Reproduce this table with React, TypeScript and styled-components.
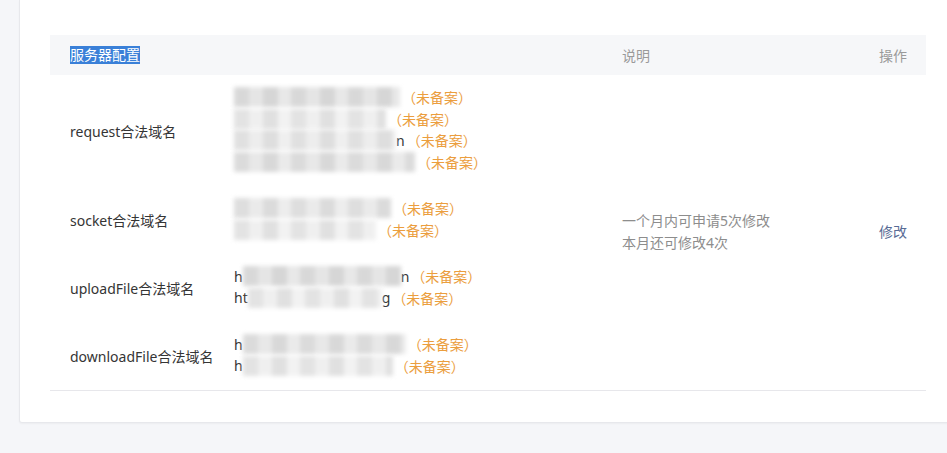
import React from "react";
import styled, { createGlobalStyle } from "styled-components";

const Global = createGlobalStyle`
  html, body { margin: 0; padding: 0; background: #f5f6f9; }
  body { font-family: "Noto Sans", "Noto Sans CJK SC", sans-serif; font-size: 14px; color: #353535; overflow: hidden; }
`;

const Page = styled.div`
  width: 947px;
  height: 453px;
  overflow: hidden;
  padding-left: 19px;
  box-sizing: border-box;
`;

const Card = styled.div`
  width: 960px;
  background: #fff;
  border: 1px solid #e7e8ec;
  border-top: none;
  border-radius: 0 0 3px 3px;
  box-shadow: 0 1px 2px rgba(0, 0, 0, 0.04);
  padding: 35px 0 31px 30px;
  box-sizing: border-box;
`;

const Table = styled.div`
  width: 876px;
  display: grid;
  grid-template-columns: 184px 388px 1fr 100px;
  border-bottom: 1px solid #e7e7eb;
`;

const HeadCell = styled.div<{ $right?: boolean; $pad?: number }>`
  background: #f6f7f9;
  height: 40px;
  display: flex;
  align-items: center;
  justify-content: ${(p) => (p.$right ? "flex-end" : "flex-start")};
  padding: ${(p) => (p.$right ? "0 19px 0 0" : `0 0 0 ${p.$pad ?? 20}px`)};
  color: #9a9a9a;
  font-size: 14px;
`;

const HeadBlank = styled.div`
  background: #f6f7f9;
  height: 40px;
`;

const Selected = styled.span`
  background: #3a80d8;
  color: #fff;
  line-height: 18px;
  display: inline-block;
`;

const LabelCell = styled.div`
  display: flex;
  align-items: center;
  padding-left: 20px;
  color: #353535;
  grid-column: 1;
`;

const DomainCell = styled.div`
  grid-column: 2;
  padding: 11.5px 0 13.5px;
  display: flex;
  flex-direction: column;
`;

const DomainLine = styled.div`
  height: 21.5px;
  display: flex;
  align-items: center;
  white-space: nowrap;
  color: #353535;
`;

const Mosaic = styled.span<{ $w: number; $shade: number }>`
  display: inline-block;
  width: ${(p) => p.$w}px;
  height: 20px;
  filter: blur(2.2px);
  background: repeating-linear-gradient(
    90deg,
    hsl(0, 0%, ${(p) => 85 + p.$shade}%) 0 15px,
    hsl(0, 0%, ${(p) => 90 + p.$shade}%) 15px 29px,
    hsl(0, 0%, ${(p) => 84 + p.$shade}%) 29px 44px,
    hsl(0, 0%, ${(p) => 91 + p.$shade}%) 44px 57px
  );
`;

const Status = styled.span`
  color: #eb9e3e;
  margin-left: 2px;
`;

const DescCell = styled.div`
  grid-column: 3;
  grid-row: 2 / span 4;
  display: flex;
  flex-direction: column;
  justify-content: center;
  color: #8d8d8d;
  line-height: 22px;
  padding-bottom: 1px;
`;

const OpCell = styled.div`
  grid-column: 4;
  grid-row: 2 / span 4;
  display: flex;
  align-items: center;
  justify-content: flex-end;
  padding-right: 19px;
  padding-bottom: 3px;
`;

const Link = styled.a`
  color: #576b95;
  text-decoration: none;
  cursor: pointer;
`;

type Line = { pre?: string; w: number; post?: string; shade?: number };

const rows: { label: string; lines: Line[] }[] = [
  {
    label: "request合法域名",
    lines: [
      { w: 166, shade: 0 },
      { w: 152, shade: 4 },
      { w: 162, post: "n", shade: 3 },
      { w: 181, shade: 1 },
    ],
  },
  {
    label: "socket合法域名",
    lines: [
      { w: 157, shade: 2 },
      { w: 142, shade: 4 },
    ],
  },
  {
    label: "uploadFile合法域名",
    lines: [
      { pre: "h", w: 158, post: "n", shade: 0 },
      { pre: "ht", w: 134, post: "g", shade: 4 },
    ],
  },
  {
    label: "downloadFile合法域名",
    lines: [
      { pre: "h", w: 163, shade: 1 },
      { pre: "h", w: 150, shade: 4 },
    ],
  },
];

export default function App() {
  return (
    <>
      <Global />
      <Page>
        <Card>
          <Table>
            <HeadCell>
              <Selected>服务器配置</Selected>
            </HeadCell>
            <HeadBlank />
            <HeadCell $pad={0}>说明</HeadCell>
            <HeadCell $right>操作</HeadCell>
            {rows.map((r) => (
              <React.Fragment key={r.label}>
                <LabelCell>{r.label}</LabelCell>
                <DomainCell>
                  {r.lines.map((l, i) => (
                    <DomainLine key={i}>
                      {l.pre}
                      <Mosaic $w={l.w} $shade={l.shade ?? 0} />
                      {l.post}
                      <Status>（未备案）</Status>
                    </DomainLine>
                  ))}
                </DomainCell>
              </React.Fragment>
            ))}
            <DescCell>
              <div>一个月内可申请5次修改</div>
              <div>本月还可修改4次</div>
            </DescCell>
            <OpCell>
              <Link>修改</Link>
            </OpCell>
          </Table>
        </Card>
      </Page>
    </>
  );
}
